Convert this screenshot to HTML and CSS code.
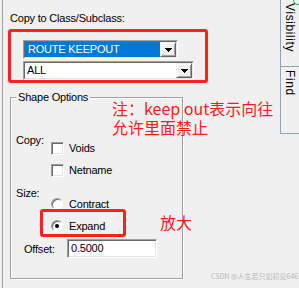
FILE: index.html
```html
<!DOCTYPE html>
<html>
<head>
<meta charset="utf-8">
<link rel="stylesheet" href="styles.css">
</head>
<body>
<div class="window">
  <div class="panel">
    <div class="caption">Copy to Class/Subclass:</div>
    <div class="mark-box">
      <div class="combo combo-class">
        <div class="combo-inner">
          <div class="combo-field selected">ROUTE KEEPOUT</div>
          <div class="combo-btn"><svg width="7" height="4" viewBox="0 0 7 4" shape-rendering="crispEdges"><path d="M0 0h7v1h-1v1h-1v1h-1v1h-1v-1h-1v-1h-1v-1h-1z" fill="#000"/></svg></div>
        </div>
      </div>
      <div class="combo combo-sub">
        <div class="combo-inner">
          <div class="combo-field">ALL</div>
          <div class="combo-btn"><svg width="7" height="4" viewBox="0 0 7 4" shape-rendering="crispEdges"><path d="M0 0h7v1h-1v1h-1v1h-1v1h-1v-1h-1v-1h-1v-1h-1z" fill="#000"/></svg></div>
        </div>
      </div>
    </div>
    <div class="group">
      <div class="group-title">Shape Options</div>
      <div class="row row-copy">
        <div class="row-label">Copy:</div>
        <div class="options">
          <div class="opt"><span class="check"></span>Voids</div>
          <div class="opt"><span class="check"></span>Netname</div>
        </div>
      </div>
      <div class="row row-size">
        <div class="row-label">Size:</div>
        <div class="options options-radio">
          <div class="opt"><span class="radio"></span>Contract</div>
          <div class="opt"><span class="radio on"></span>Expand</div>
        </div>
      </div>
      <div class="row row-offset">
        <div class="offset-label">Offset:</div>
        <div class="text-input">0.5000</div>
      </div>
    </div>
  </div>
  <div class="tabs">
    <div class="tab"><span class="tab-text">Visibility</span></div>
    <div class="tab"><span class="tab-text">Find</span></div>
  </div>
  <span class="corner-icon"></span>
  <div class="note">注：keep out表示向往<br>允许里面禁止</div>
  <div class="expand-mark"></div>
  <div class="note-big">放大</div>
  <div class="watermark">CSDN @人生若只如初见646</div>
</div>
</body>
</html>
```
FILE: styles.css
```css
html, body {
  margin: 0;
  padding: 0;
  background: #f0f0f0;
}

.window {
  position: relative;
  width: 299px;
  height: 288px;
  overflow: hidden;
  display: flex;
  background: #f0f0f0;
  font-family: "Liberation Sans", Arial, sans-serif;
  font-size: 11px;
  letter-spacing: -0.2px;
  color: #000;
}

.panel {
  margin-left: 2px;
  border-left: 1px solid #a0a0a0;
  width: 278px;
  box-sizing: border-box;
  padding: 11px 0 0 7px;
  flex: none;
}

.caption {
  line-height: 14px;
  height: 14px;
}

.mark-box {
  margin: 4px 0 0 -2px;
  width: 200px;
  box-sizing: border-box;
  border: 3px solid #ff1f1f;
  border-radius: 3px;
  padding: 8px 0 0 12px;
  height: 54px;
}

.combo {
  height: 19px;
  box-sizing: border-box;
  border: 1px solid;
  border-color: #a0a0a0 #ffffff #ffffff #a0a0a0;
  background: #fff;
}

.combo-class { width: 155px; }
.combo-sub { width: 171px; margin-top: 2px; }

.combo-inner {
  height: 100%;
  box-sizing: border-box;
  border: 1px solid;
  border-color: #696969 #e3e3e3 #e3e3e3 #696969;
  display: flex;
}

.combo-field {
  flex: 1;
  line-height: 15px;
  padding-left: 2px;
  white-space: nowrap;
}

.combo-field.selected {
  background: #0078d7;
  color: #fff;
  padding-left: 3px;
}

.combo-btn {
  width: 16px;
  box-sizing: border-box;
  border: 1px solid;
  border-color: #f0f0f0 #696969 #696969 #f0f0f0;
  box-shadow: inset 1px 1px 0 #fff, inset -1px -1px 0 #a0a0a0;
  background: #f0f0f0;
  display: flex;
  align-items: center;
  justify-content: center;
}

.combo-btn svg { display: block; }

.group {
  position: relative;
  margin-top: 14px;
  width: 173px;
  height: 182px;
  box-sizing: border-box;
  border: 1px solid #a0a0a0;
  box-shadow: inset 1px 1px 0 #fff, 1px 1px 0 #fff;
  padding: 35px 0 0 5px;
}

.group-title {
  position: absolute;
  top: -8px;
  left: 5px;
  padding: 0 2px;
  background: #f0f0f0;
  line-height: 14px;
}

.row {
  display: flex;
  align-items: flex-start;
}

.row-label {
  width: 35px;
  line-height: 14px;
}

.options {
  padding-top: 8px;
  display: flex;
  flex-direction: column;
  gap: 8px;
}

.options-radio {
  padding-top: 11px;
}

.row-size { margin-top: 9px; }

.opt {
  display: flex;
  align-items: center;
  line-height: 14px;
  height: 14px;
}

.check {
  width: 13px;
  height: 13px;
  box-sizing: border-box;
  border: 1px solid;
  border-color: #a0a0a0 #fff #fff #a0a0a0;
  box-shadow: inset 1px 1px 0 #696969, inset -1px -1px 0 #e3e3e3;
  background: #fff;
  margin-right: 5px;
}

.radio {
  width: 12px;
  height: 12px;
  box-sizing: border-box;
  border-radius: 50%;
  border: 1px solid;
  border-color: #a0a0a0 #fff #fff #a0a0a0;
  box-shadow: inset 1px 1px 0 #696969;
  background: #fff;
  margin-right: 6px;
  display: flex;
  align-items: center;
  justify-content: center;
}

.radio.on::after {
  content: "";
  width: 4px;
  height: 4px;
  border-radius: 50%;
  background: #000;
}

.row-offset {
  margin-top: 6px;
  align-items: center;
  margin-left: -5px;
}

.offset-label {
  width: 43px;
  padding-left: 13px;
  line-height: 14px;
}

.text-input {
  width: 90px;
  height: 19px;
  box-sizing: border-box;
  border: 1px solid;
  border-color: #a0a0a0 #fff #fff #a0a0a0;
  box-shadow: inset 1px 1px 0 #696969, inset -1px -1px 0 #e3e3e3;
  background: #fff;
  line-height: 17px;
  padding-left: 3px;
}

.tabs {
  flex: 1;
  border-left: 1px solid #8ea5ba;
  height: 134px;
  display: flex;
  flex-direction: column;
}

.tab {
  height: 67px;
  box-sizing: border-box;
  border-bottom: 1px solid #8ea5ba;
  padding: 3px 0 0 2px;
}

.tab-text {
  writing-mode: vertical-rl;
  font-size: 12px;
  line-height: 14px;
  letter-spacing: 0.6px;
}

.corner-icon {
  position: absolute;
  right: -4px;
  top: -5px;
  width: 8px;
  height: 8px;
  border-radius: 50%;
  border: 1px solid #3aa54a;
  background: #e8f4ea;
}

.note {
  position: absolute;
  left: 112px;
  top: 99px;
  font-family: "Noto Sans CJK SC", sans-serif;
  font-size: 16px;
  line-height: 19px;
  letter-spacing: 0;
  color: #ff1a1a;
  white-space: nowrap;
}

.expand-mark {
  position: absolute;
  left: 40px;
  top: 209px;
  width: 86px;
  height: 28px;
  box-sizing: border-box;
  border: 3px solid #ff1f1f;
  border-radius: 3px;
}

.note-big {
  position: absolute;
  left: 160px;
  top: 213px;
  font-family: "Noto Sans CJK SC", sans-serif;
  font-size: 16px;
  line-height: 19px;
  letter-spacing: 0;
  color: #ff1a1a;
}

.watermark {
  position: absolute;
  left: 211px;
  top: 272px;
  font-family: "Noto Sans CJK SC", sans-serif;
  font-size: 7px;
  line-height: 9px;
  letter-spacing: 0;
  color: #b8b8b8;
  white-space: nowrap;
}
```
